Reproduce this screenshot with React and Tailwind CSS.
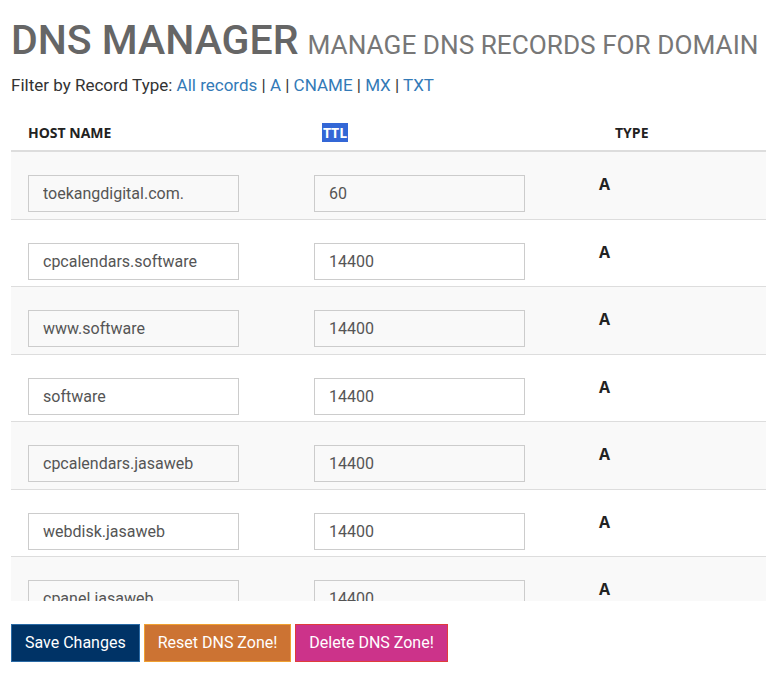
import { useState } from 'react'

const records = [
    { host: 'toekangdigital.com.', ttl: '60', type: 'A' },
    { host: 'cpcalendars.software', ttl: '14400', type: 'A' },
    { host: 'www.software', ttl: '14400', type: 'A' },
    { host: 'software', ttl: '14400', type: 'A' },
    { host: 'cpcalendars.jasaweb', ttl: '14400', type: 'A' },
    { host: 'webdisk.jasaweb', ttl: '14400', type: 'A' },
    { host: 'cpanel.jasaweb', ttl: '14400', type: 'A' },
    { host: 'whm.jasaweb', ttl: '14400', type: 'A' },
]

const filters = ['All records', 'A', 'CNAME', 'MX', 'TXT']

function Field({ value }) {
    const [val, setVal] = useState(value)
    return (
        <input
            className="h-[37px] w-[211px] border border-[#ccc] bg-transparent px-[14px] text-[16px] text-[#555] outline-none"
            value={val}
            onChange={(e) => setVal(e.target.value)}
        />
    )
}

export default function App() {
    return (
        <div className="min-h-[678px] bg-white pl-[11px] font-['Roboto',sans-serif] text-[#333]">
            <h1 className="flex items-baseline gap-[9px] whitespace-nowrap pt-[16px] text-[41px] font-medium leading-[48px] text-[#666]">
                DNS MANAGER
                <small className="text-[26.2px] font-normal text-[#777]">MANAGE DNS RECORDS FOR DOMAIN</small>
            </h1>
            <p className="mt-[5px] text-[17px] leading-[22px]">
                Filter by Record Type:{' '}
                {filters.map((f, i) => (
                    <span key={f}>
                        {i > 0 && ' | '}
                        <a href="#" className="text-[#337ab7]">{f}</a>
                    </span>
                ))}
            </p>
            <div className="mt-[16px] h-[489px] overflow-hidden">
                <div className="grid h-[40px] grid-cols-[286px_286px_1fr] items-center border-b-2 border-[#ddd] pt-[2px] font-['Open_Sans',sans-serif] text-[14px] font-bold text-[#222]">
                    <div className="pl-[17px]">HOST NAME</div>
                    <div className="pl-[25px]"><span className="bg-[#3367d6] px-[1px] text-white">TTL</span></div>
                    <div className="pl-[32px]">TYPE</div>
                </div>
                {records.map((r, i) => (
                    <div key={i} className={`grid grid-cols-[286px_286px_1fr] border-b border-[#ddd] ${i % 2 === 0 ? 'bg-[#f9f9f9]' : 'bg-white'}`}>
                        <div className="pb-[6.5px] pl-[17px] pt-[23px]"><Field value={r.host} /></div>
                        <div className="pb-[6.5px] pl-[17px] pt-[23px]"><Field value={r.ttl} /></div>
                        <div className="pl-[16px] pt-[24px] font-['Open_Sans',sans-serif] text-[16px] font-bold leading-[16px] text-[#222]">{r.type}</div>
                    </div>
                ))}
            </div>
            <div className="mt-[23px] flex gap-[4px]">
                <button className="h-[38px] border border-[#2a6aa5] bg-[#003366] px-[13px] text-[16px] text-white">Save Changes</button>
                <button className="h-[38px] border border-[#f0a030] bg-[#cc7333] px-[13px] text-[16px] text-white">Reset DNS Zone!</button>
                <button className="h-[38px] border border-[#e03c3c] bg-[#cc338a] px-[13px] text-[16px] text-white">Delete DNS Zone!</button>
            </div>
        </div>
    )
}
